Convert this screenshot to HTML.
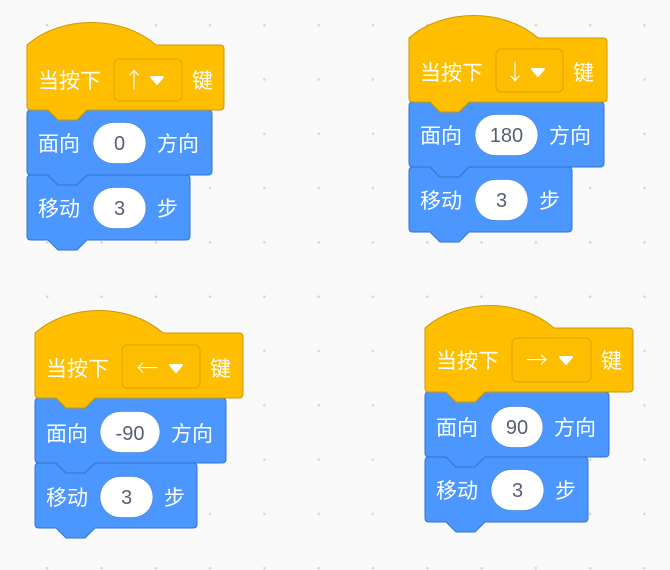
<!DOCTYPE html>
<html><head><meta charset="utf-8"><style>
html,body{margin:0;padding:0;}
body{width:670px;height:570px;overflow:hidden;background-color:#f9f9f9;
background-image:radial-gradient(circle at 1.2px 1.2px,#d4d4d4 1px,transparent 1.6px);
background-size:54.3px 54.3px;background-position:46px 24px;}
svg{position:absolute;left:0;top:0;}
.t{font-family:"Liberation Sans","Noto Sans CJK SC",sans-serif;font-size:21px;fill:#fff;}
.n{font-family:"Liberation Sans",sans-serif;font-size:20px;fill:#575e75;text-anchor:middle;}
.a{font-family:"Noto Sans CJK SC",sans-serif;font-size:22px;fill:#fff;text-anchor:middle;font-weight:300;}
.hat{fill:#ffbf00;stroke:#cc9900;stroke-width:1;}
.blk{fill:#4c97ff;stroke:#3373cc;stroke-width:1;}
.dd{fill:#fdbd00;stroke:#dca500;stroke-width:1;}
.ov{fill:#fff;stroke:#3373cc;stroke-width:0.5;}
.tri{fill:#fff;stroke:#fff;stroke-width:2;stroke-linejoin:round;}
</style></head><body>
<svg width="670" height="570" viewBox="0 0 670 570">
<!-- Set A -->
<path class="blk" d="M27,179 Q27,175 31,175 L48,175 L58,185 L77,185 L87,175 L186,175 Q190,175 190,179 L190,236 Q190,240 186,240 L87,240 L77,250 L58,250 L48,240 L31,240 Q27,240 27,236 Z"/>
<path class="blk" d="M27,114 Q27,110 31,110 L48,110 L58,120 L77,120 L87,110 L208,110 Q212,110 212,114 L212,171 Q212,175 208,175 L87,175 L77,185 L58,185 L48,175 L31,175 Q27,175 27,171 Z"/>
<path class="hat" d="M27,45 C61,15 122,15 156,45 L220,45 Q224,45 224,49 L224,106 Q224,110 220,110 L87,110 L77,120 L58,120 L48,110 L31,110 Q27,110 27,106 Z"/>
<text class="t" x="38" y="88">当按下</text>
<rect class="dd" x="114" y="59" width="68" height="42" rx="5"/>
<text class="a" x="134" y="88">↑</text>
<path class="tri" d="M151,77 L163,77 L157,84 Z"/>
<text class="t" x="192" y="88">键</text>
<text class="t" x="38" y="151">面向</text>
<rect class="ov" x="93" y="122.5" width="53" height="41" rx="20.5"/>
<text class="n" x="119.5" y="150">0</text>
<text class="t" x="157" y="151">方向</text>
<text class="t" x="38" y="216">移动</text>
<rect class="ov" x="93" y="187.5" width="53" height="41" rx="20.5"/>
<text class="n" x="119.5" y="215">3</text>
<text class="t" x="157" y="216">步</text>

<!-- Set B -->
<path class="blk" d="M409,171 Q409,167 413,167 L430,167 L440,177 L459,177 L469,167 L568,167 Q572,167 572,171 L572,228 Q572,232 568,232 L469,232 L459,242 L440,242 L430,232 L413,232 Q409,232 409,228 Z"/>
<path class="blk" d="M409,106 Q409,102 413,102 L430,102 L440,112 L459,112 L469,102 L600,102 Q604,102 604,106 L604,163 Q604,167 600,167 L469,167 L459,177 L440,177 L430,167 L413,167 Q409,167 409,163 Z"/>
<path class="hat" d="M409,38 C443,8 504,8 538,38 L603,38 Q607,38 607,42 L607,98 Q607,102 603,102 L469,102 L459,112 L440,112 L430,102 L413,102 Q409,102 409,98 Z"/>
<text class="t" x="420" y="80">当按下</text>
<rect class="dd" x="496" y="49" width="67" height="43" rx="5"/>
<text class="a" x="515" y="80">↓</text>
<path class="tri" d="M532,69 L544,69 L538,76 Z"/>
<text class="t" x="573" y="80">键</text>
<text class="t" x="420" y="143">面向</text>
<rect class="ov" x="475" y="114.5" width="63" height="41" rx="20.5"/>
<text class="n" x="506.5" y="142">180</text>
<text class="t" x="549" y="143">方向</text>
<text class="t" x="420" y="208">移动</text>
<rect class="ov" x="475" y="179.5" width="53" height="41" rx="20.5"/>
<text class="n" x="501.5" y="207">3</text>
<text class="t" x="539" y="208">步</text>

<!-- Set C -->
<path class="blk" d="M35,467 Q35,463 39,463 L56,463 L66,473 L85,473 L95,463 L193,463 Q197,463 197,467 L197,524 Q197,528 193,528 L95,528 L85,538 L66,538 L56,528 L39,528 Q35,528 35,524 Z"/>
<path class="blk" d="M35,402 Q35,398 39,398 L56,398 L66,408 L85,408 L95,398 L222,398 Q226,398 226,402 L226,459 Q226,463 222,463 L95,463 L85,473 L66,473 L56,463 L39,463 Q35,463 35,459 Z"/>
<path class="hat" d="M35,333 C69,303 129,303 163,333 L239,333 Q243,333 243,337 L243,394 Q243,398 239,398 L95,398 L85,408 L66,408 L56,398 L39,398 Q35,398 35,394 Z"/>
<text class="t" x="46" y="376">当按下</text>
<rect class="dd" x="122" y="345" width="78" height="43" rx="5"/>
<text class="a" x="147" y="376">←</text>
<path class="tri" d="M170,365 L182,365 L176,372 Z"/>
<text class="t" x="210" y="376">键</text>
<text class="t" x="46" y="441">面向</text>
<rect class="ov" x="100" y="411.5" width="60" height="41" rx="20.5"/>
<text class="n" x="130" y="440">-90</text>
<text class="t" x="171" y="441">方向</text>
<text class="t" x="46" y="505">移动</text>
<rect class="ov" x="100" y="476.5" width="53" height="41" rx="20.5"/>
<text class="n" x="126.5" y="504">3</text>
<text class="t" x="164" y="505">步</text>

<!-- Set D -->
<path class="blk" d="M425,461 Q425,457 429,457 L446,457 L456,467 L475,467 L485,457 L584,457 Q588,457 588,461 L588,518 Q588,522 584,522 L485,522 L475,532 L456,532 L446,522 L429,522 Q425,522 425,518 Z"/>
<path class="blk" d="M425,396 Q425,392 429,392 L446,392 L456,402 L475,402 L485,392 L605,392 Q609,392 609,396 L609,453 Q609,457 605,457 L485,457 L475,467 L456,467 L446,457 L429,457 Q425,457 425,453 Z"/>
<path class="hat" d="M425,328 C459,298 520,298 554,328 L629,328 Q633,328 633,332 L633,388 Q633,392 629,392 L485,392 L475,402 L456,402 L446,392 L429,392 Q425,392 425,388 Z"/>
<text class="t" x="436" y="368">当按下</text>
<rect class="dd" x="512" y="338" width="79" height="44" rx="5"/>
<text class="a" x="537" y="368">→</text>
<path class="tri" d="M560,357 L572,357 L566,364 Z"/>
<text class="t" x="601" y="368">键</text>
<text class="t" x="436" y="435">面向</text>
<rect class="ov" x="491" y="406.5" width="52" height="41" rx="20.5"/>
<text class="n" x="517" y="434">90</text>
<text class="t" x="554" y="435">方向</text>
<text class="t" x="436" y="498">移动</text>
<rect class="ov" x="491" y="469.5" width="53" height="41" rx="20.5"/>
<text class="n" x="517.5" y="497">3</text>
<text class="t" x="555" y="498">步</text>
</svg>
</body></html>
